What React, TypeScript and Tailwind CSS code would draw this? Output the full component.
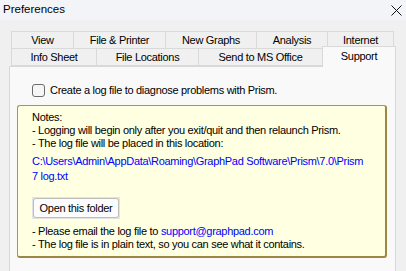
import React from 'react';

const Tab = ({ label, w }: { label: string; w: string }) => (
    <div className={`${w} h-full flex items-center justify-center border border-[#d9d9d9] -ml-px first:ml-0 bg-[#f0f0f0]`}>
        {label}
    </div>
);

const App: React.FC = () => {
    return (
        <div className="w-[406px] h-[271px] overflow-hidden bg-[#f0f0f0] font-['Liberation_Sans',Arial,sans-serif] text-[11px] tracking-[-0.3px] text-black">
            {/* title bar */}
            <div className="h-[20px] bg-[#f3f4f8] flex items-center justify-between pl-[3px] pr-[3px]">
                <span className="text-[11.5px] tracking-normal leading-none">Preferences</span>
                <svg width="11" height="11" viewBox="0 0 11 11" className="mr-[1px]">
                    <path d="M0.5 0.5 L10.5 10.5 M10.5 0.5 L0.5 10.5" stroke="#111" strokeWidth="1" />
                </svg>
            </div>

            <div className="ml-[10px] w-[386px] pt-[11px]">
                {/* back row of tabs */}
                <div className="flex h-[18px] ml-[1px]">
                    <Tab label="View" w="w-[63px]" />
                    <Tab label="File & Printer" w="w-[93px]" />
                    <Tab label="New Graphs" w="w-[92px]" />
                    <Tab label="Analysis" w="w-[72px]" />
                    <Tab label="Internet" w="w-[67px]" />
                </div>
                {/* front row of tabs */}
                <div className="flex h-[18px] ml-[1px] -mt-px">
                    <Tab label="Info Sheet" w="w-[86px]" />
                    <Tab label="File Locations" w="w-[103px]" />
                    <Tab label="Send to MS Office" w="w-[125px]" />
                    <div className="relative z-10 self-end w-[74px] h-[21px] -mb-px -ml-px flex justify-center pt-[1px] border border-b-0 border-[#d9d9d9] bg-[#f9f9f9]">
                        Support
                    </div>
                </div>

                {/* panel */}
                <div className="-ml-px border border-[#d9d9d9] bg-[#f9f9f9] h-[220px] pt-[17px] pl-[7px] pr-[6px]">
                    <label className="flex items-center gap-[5px] ml-[15px] leading-[13px]">
                        <span className="w-[13px] h-[13px] rounded-[3px] border border-[#6b6b6b] bg-[#f6f6f6]" />
                        Create a log file to diagnose problems with Prism.
                    </label>

                    <div className="mt-[8px] h-[153px] w-[370px] rounded-[3px] border border-[#a8954f] border-r-2 border-b-2 border-r-[#9c8844] border-b-[#9c8844] bg-[#ffffe1] pl-[14px] pt-[5px] leading-[13px]">
                        <div>Notes:</div>
                        <div>- Logging will begin only after you exit/quit and then relaunch Prism.</div>
                        <div>- The log file will be placed in this location:</div>

                        <div className="mt-[4px] leading-[14.5px] text-[#0000ff]">
                            <div className="whitespace-nowrap">C:\Users\Admin\AppData\Roaming\GraphPad Software\Prism\7.0\Prism</div>
                            <div>7 log.txt</div>
                        </div>

                        <div className="mt-[14px] w-[88px] h-[22px] bg-[#e3e3e3] p-px">
                            <button className="w-full h-full rounded-[3px] border border-[#bdbdbd] bg-[#fcfcfc] text-[11px] tracking-[-0.3px] leading-none whitespace-nowrap">
                                Open this folder
                            </button>
                        </div>

                        <div className="mt-[6px]">
                            - Please email the log file to <span className="text-[#0000ff]">support@graphpad.com</span>
                        </div>
                        <div>- The log file is in plain text, so you can see what it contains.</div>
                    </div>
                </div>
            </div>
        </div>
    );
};

export default App;
